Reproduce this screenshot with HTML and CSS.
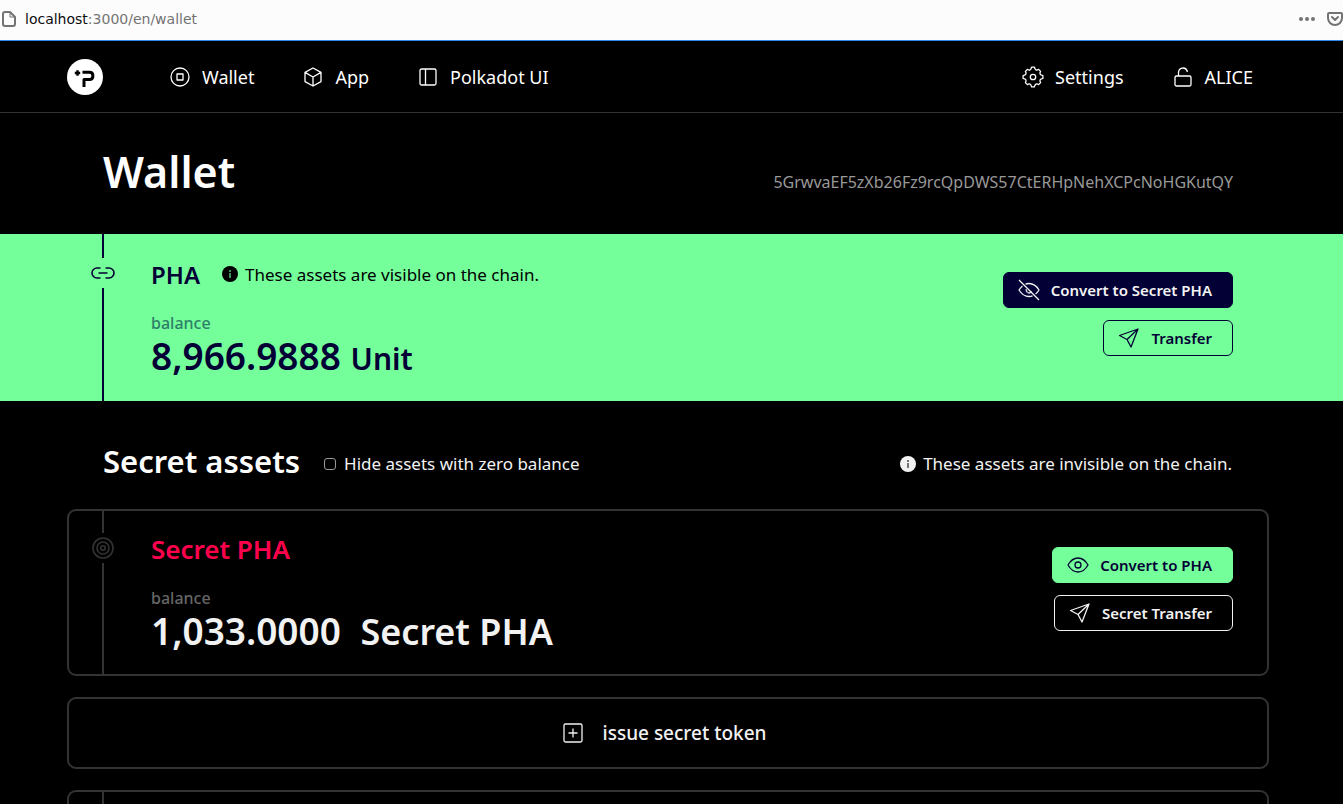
FILE: index.html
```html
<!DOCTYPE html>
<html lang="en">
<head>
<meta charset="utf-8">
<title>Wallet</title>
<link rel="stylesheet" href="styles.css">
</head>
<body>
<div class="urlbar">
  <svg class="page-icon" width="16" height="18" viewBox="0 0 16 18" stroke="#737373" stroke-width="2" stroke-linejoin="round"><path d="M5 2h5l5 5v7a2 2 0 0 1-2 2H5a2 2 0 0 1-2-2V4a2 2 0 0 1 2-2z"/><path d="M10 2v5h5" stroke-width="1"/></svg>
  <span class="url"><span class="host">localhost</span>:3000/en/wallet</span>
  <svg class="dots" width="18" height="6" viewBox="0 0 18 6"><circle cx="3" cy="3" r="2"/><circle cx="9" cy="3" r="2"/><circle cx="15" cy="3" r="2"/></svg>
  <svg width="16" height="16" viewBox="0 0 16 16" stroke="#737373" stroke-width="2" stroke-linecap="round" stroke-linejoin="round"><path d="M2 2h12a1 1 0 0 1 1 1v4a7 7 0 0 1-14 0V3a1 1 0 0 1 1-1z"/><path d="M5 6l3 3 3-3"/></svg>
</div>
<header class="topbar">
  <nav class="nav">
    <a class="logo" href="#" aria-label="Home"><svg width="36" height="36" viewBox="0 0 36 36"><circle cx="18" cy="18" r="18" fill="#fff"/><g fill="none" stroke="#000"><path d="M15.500 13.300h7q3.400 0 3.400 3.600t-3.400 3.600h-5.500v7.500" stroke-width="3"/><path d="M10.500 11.300v5.400M7.800 14h5.400" stroke-width="2.400"/></g></svg></a>
    <a class="nav-link" href="#"><svg width="22" height="22" viewBox="0 0 22 22"><circle cx="11" cy="11" r="9"/><rect x="8" y="8" width="6" height="6"/></svg>Wallet</a>
    <a class="nav-link" href="#"><svg width="22" height="22" viewBox="0 0 22 22"><path d="M11 2l8 4.400v9.200L11 20l-8-4.400V6.400zM3 6.400l8 4.600 8-4.600M11 11v9"/></svg>App</a>
    <a class="nav-link" href="#"><svg width="22" height="22" viewBox="0 0 22 22"><rect x="3" y="3" width="16" height="16" rx="1.500"/><path d="M8.500 3v16"/></svg>Polkadot UI</a>
    <a class="nav-link settings" href="#"><svg width="22" height="22" viewBox="0 0 22 22"><path d="M9.600 1.100h2.800Q13.300 5.500 16.600 3.400L18.600 5.400Q16.500 8.700 20.900 9.600V12.400Q16.500 13.300 18.600 16.600L16.600 18.600Q13.300 16.500 12.400 20.900H9.600Q8.700 16.500 5.400 18.600L3.400 16.600Q5.500 13.300 1.100 12.400V9.600Q5.500 8.700 3.400 5.400L5.400 3.400Q8.700 5.500 9.600 1.100z"/><circle cx="11" cy="11" r="2.700"/></svg>Settings</a>
    <a class="nav-link" href="#"><svg width="22" height="22" viewBox="0 0 22 22"><rect x="3" y="10" width="16" height="10" rx="1.500"/><path d="M6.500 10V6.500a4.500 4.500 0 0 1 8.700-1.600V6"/></svg>ALICE</a>
  </nav>
</header>
<main>
  <section class="title-row">
    <h1>Wallet</h1>
    <span class="address">5GrwvaEF5zXb26Fz9rcQpDWS57CtERHpNehXCPcNoHGKutQY</span>
  </section>

  <section class="public">
    <div class="asset">
      <div class="rail"><svg width="26" height="14" viewBox="0 0 26 14"><path d="M10.500 2H7a5 5 0 0 0 0 10h3.500M15.500 2H19a5 5 0 0 1 0 10h-3.500M8.500 7h9"/></svg></div>
      <div class="info">
        <div class="name-row"><h2>PHA</h2><span class="hint"><svg width="16" height="16" viewBox="0 0 16 16"><circle cx="8" cy="8" r="8" fill="#000"/><path d="M7.200 4h1.600v2H7.200zM7.200 7h1.600v5H7.200z" fill="#4fb36c"/></svg>These assets are visible on the chain.</span></div>
        <div class="label">balance</div>
        <div class="amount">8,966.9888 <span class="unit">Unit</span></div>
      </div>
      <div class="actions">
        <button class="btn navy" type="button"><svg width="22" height="22" viewBox="0 0 22 22"><path d="M7.500 5.200Q9 4.500 11 4.500q6 0 10 6.500-1.500 2.600-3.400 4M14.500 16.800Q12.800 17.500 11 17.500 5 17.500 1 11q1.500-2.500 3.500-4.100M13.600 12.200A2.900 2.900 0 0 1 9.800 13.600M8.200 10.200Q7.800 12 9.500 13.500M1 1l20 20"/></svg>Convert to Secret PHA</button>
        <button class="btn outline-navy" type="button"><svg width="22" height="22" viewBox="0 0 22 22"><path d="M20 2L1.500 8.500 9 12.500l4 7.500zM20 2L9 12.500"/></svg>Transfer</button>
      </div>
    </div>
  </section>

  <section class="secret">
    <div class="secret-head">
      <h2>Secret assets</h2>
      <label class="toggle"><input type="checkbox">Hide assets with zero balance</label>
      <span class="hint light"><svg width="16" height="16" viewBox="0 0 16 16"><circle cx="8" cy="8" r="8" fill="#f2f2f2"/><path d="M7.200 4h1.600v2H7.200zM7.200 7h1.600v5H7.200z" fill="#555"/></svg>These assets are invisible on the chain.</span>
    </div>
    <article class="card asset">
      <div class="rail"><svg width="22" height="22" viewBox="0 0 22 22"><circle cx="11" cy="11" r="10"/><circle cx="11" cy="11" r="6"/><circle cx="11" cy="11" r="2.200"/></svg></div>
      <div class="info">
        <div class="name-row"><h2>Secret PHA</h2></div>
        <div class="label">balance</div>
        <div class="amount">1,033.0000 <span class="token">Secret PHA</span></div>
      </div>
      <div class="actions">
        <button class="btn green" type="button"><svg width="22" height="22" viewBox="0 0 22 22"><path d="M1 11q4-7 10-7t10 7q-4 7-10 7T1 11z"/><circle cx="11" cy="11" r="3"/></svg>Convert to PHA</button>
        <button class="btn outline-light" type="button"><svg width="22" height="22" viewBox="0 0 22 22"><path d="M20 2L1.500 8.500 9 12.500l4 7.500zM20 2L9 12.500"/></svg>Secret Transfer</button>
      </div>
    </article>
    <button class="card issue" type="button"><svg width="22" height="22" viewBox="0 0 22 22"><rect x="2" y="2" width="18" height="18" rx="1.500"/><path d="M11 6.500v9M6.500 11h9"/></svg>issue secret token</button>
    <article class="card asset next"><div class="rail"></div></article>
  </section>
</main>
</body>
</html>
```
FILE: styles.css
```css
* { box-sizing: border-box; }
body {
  margin: 0;
  height: 100vh;
  overflow: hidden;
  background: #000;
  color: #f2f2f2;
  font-family: "Noto Sans", "Open Sans", sans-serif;
  font-size: 17px;
}
h1, h2 { margin: 0; font-weight: 600; }
svg { display: block; flex: none; fill: none; stroke-linejoin: round; }

.urlbar {
  display: flex;
  align-items: center;
  height: 41px;
  padding-bottom: 2px;
  background: #fcfcfc;
  border-bottom: 1px solid #2f86ee;
  color: #737373;
  font-family: "DejaVu Sans", sans-serif;
  font-size: 14px;
}
.url { flex: 1; margin-left: 9px; }
.host { color: #0c0c0d; }
.dots { margin-right: 11px; fill: #737373; }

.topbar { padding: 0 90px 0 67px; border-bottom: 1px solid #333; }
.nav { display: flex; align-items: center; height: 71px; }
.logo { margin-right: 66px; }
.nav-link {
  display: flex;
  align-items: center;
  gap: 11px;
  margin-right: 48px;
  color: #fff;
  font-size: 18px;
  text-decoration: none;
}
.nav-link:last-child { margin-right: 0; }
.nav-link.settings { margin-left: auto; }
.nav-link svg { stroke: #fff; stroke-width: 1.3; }

.title-row {
  display: flex;
  align-items: center;
  justify-content: space-between;
  height: 121px;
  padding: 0 110px 4px 103px;
}
h1 { color: #fff; font-size: 43px; line-height: 60px; }
.address { padding-top: 20px; color: #999; font-size: 16px; }

.public {
  padding: 0 74px 0 67px;
  background: #74ff9b;
  color: #030035;
}
.asset { display: flex; min-height: 167px; padding: 0 36px 0 22px; }
.rail {
  display: flex;
  flex-direction: column;
  align-items: center;
  width: 28px;
  color: #030035;
}
.rail::before, .rail::after { content: ""; width: 2px; background: currentColor; }
.rail::before { height: 24px; }
.rail::after { flex: 1; }
.rail svg { margin: 8px 0; stroke: currentColor; stroke-width: 1.6; }
.info { flex: 1; padding: 20px 0 0 34px; }
.name-row { display: flex; align-items: center; gap: 22px; height: 40px; }
.name-row h2 { font-size: 26px; }
.public h2 { font-size: 24px; }
.hint { display: flex; align-items: center; gap: 7px; color: #000; }
.light { margin-left: auto; color: #f2f2f2; }
.label { margin-top: 18px; color: #2e7f68; font-size: 16px; font-weight: 500; line-height: 22px; }
.amount { font-size: 37px; font-weight: 600; line-height: 44px; }
.unit { font-size: 30px; }
.token { margin-left: 10px; font-size: 36px; }

.actions { display: flex; flex-direction: column; align-items: flex-end; gap: 12px; padding-top: 38px; }
.btn {
  display: flex;
  align-items: center;
  gap: 11px;
  height: 36px;
  padding: 0 20px 1px 14px;
  border: 1px solid;
  border-radius: 6px;
  background: none;
  font: 600 15px "Noto Sans", sans-serif;
}
.btn svg, .issue svg { stroke: currentColor; stroke-width: 1.3; }
.navy { background: #030035; border-color: #030035; color: #f2f2f2; }
.outline-navy { border-color: #030035; color: #030035; }
.green { background: #74ff9b; border-color: #74ff9b; color: #030035; }
.outline-light { border-color: #f2f2f2; color: #f2f2f2; }

.secret { padding: 0 74px 0 67px; }
.secret-head { display: flex; align-items: center; height: 108px; padding: 11px 37px 0 36px; }
.secret-head h2 { color: #fff; font-size: 31px; }
.toggle { display: flex; align-items: center; gap: 8px; margin-left: 24px; padding-top: 6px; }
.secret-head .hint { padding-top: 6px; }
.toggle input {
  appearance: none;
  width: 12px;
  height: 12px;
  margin: 0;
  border: 1px solid #999;
  border-radius: 3px;
}
.card { border: 2px solid #333; border-radius: 9px; }
.card.asset { padding: 0 34px 0 20px; margin-bottom: 21px; }
.card .rail { color: #333; }
.card .rail::before { height: 22px; }
.card .rail svg { margin: 4px 0; }
.card .info { padding-top: 18px; }
.card .actions { padding-top: 36px; }
.card h2 { color: #ff004d; }
.card .label { color: #666; }
.issue {
  display: flex;
  align-items: center;
  justify-content: center;
  gap: 19px;
  width: 100%;
  height: 72px;
  padding: 0 8px 0 0;
  margin-bottom: 21px;
  background: none;
  color: #f2f2f2;
  font: 500 19px "Noto Sans", sans-serif;
}
```
